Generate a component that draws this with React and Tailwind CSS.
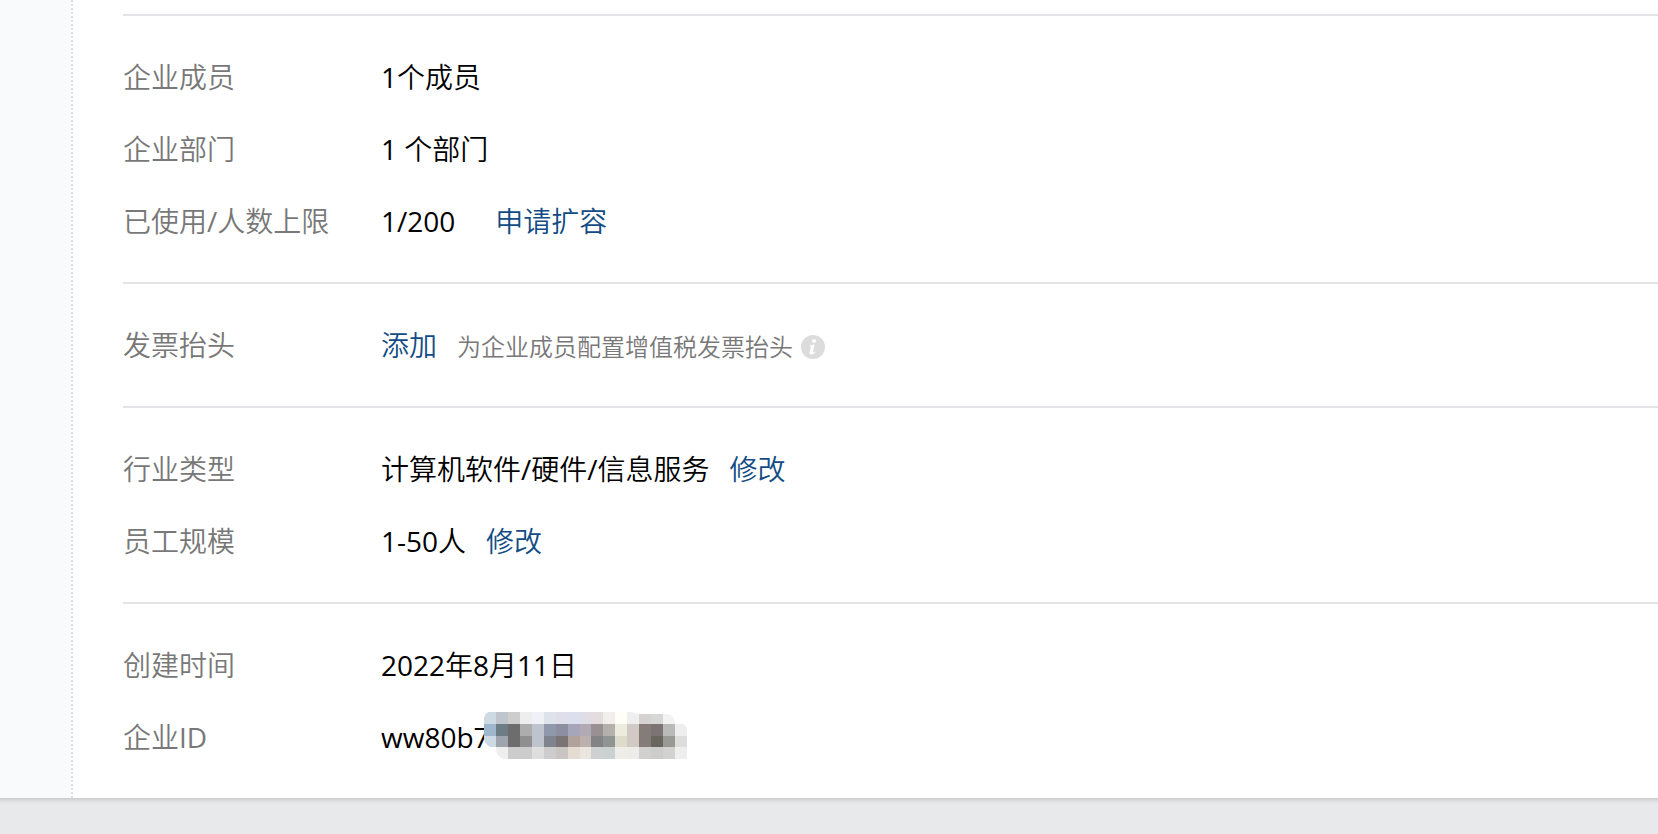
import clsx from "clsx";

const CELL = 12;

// one array per row of blocks, null leaves the cell empty
const MOSAIC = [
  ["#cddae4", "#bfc4cd", "#cdcdcd", "#eeeeee", "#f0f1f6", "#dde2eb", "#dedfeb", "#dcdfed", "#dfdde6", "#e4dddf", "#f2eeeb", "#fffff7", "#efefef", "#d6d2d2", "#d8d7d8", "#f3f3f3", null],
  ["#9fb7cc", "#6e7c86", "#6d6d6d", "#adadad", "#bfc3ce", "#9099ac", "#8d8fa0", "#a7a5b9", "#b1aab5", "#9a8f92", "#b4b0ac", "#ebecdd", "#d1cac4", "#857b79", "#7c7473", "#b9bab9", "#eeeeee"],
  ["#cddae4", "#a0a4ae", "#6d6d6d", "#8f8f8f", "#bfc3ce", "#7f848e", "#7a7475", "#b1a29c", "#bbb1af", "#838385", "#909493", "#dddccb", "#d1cac4", "#857b79", "#69665e", "#999a95", "#dddddd"],
  [null, "#eeeeee", "#cccccc", "#cccccc", "#dedede", "#cdcdcd", "#c9c5c2", "#e5dbd1", "#e9e6e0", "#ced0d1", "#cbd0d0", "#eeede8", "#edece8", "#d2d0cf", "#cccccb", "#d2d2d1", "#eeeeee"],
];

function Mosaic({ className }) {
  return (
    <svg width="203" height="47" viewBox="0 0 204 48" preserveAspectRatio="none" className={className} aria-hidden="true">
      <clipPath id="mosaic-edge">
        <path d="M5 0H148L156 2H184Q192 3 192 12H198Q204 13 204 18V48H20Q12 46 12 36H7Q0 33 0 26V6Q1 1 5 0Z" />
      </clipPath>
      <g clipPath="url(#mosaic-edge)" shapeRendering="crispEdges">
        {MOSAIC.map((row, y) =>
          row.map((fill, x) =>
            fill && <rect key={`${x}-${y}`} x={x * CELL} y={y * CELL} width={CELL} height={CELL} fill={fill} />
          )
        )}
      </g>
    </svg>
  );
}

function InfoIcon() {
  return (
    <svg width="24" height="24" viewBox="0 0 24 24" aria-hidden="true">
      <circle cx="12" cy="12" r="12" fill="#dcdcdc" />
      <circle cx="13" cy="6" r="2" fill="#fff" />
      <path d="M9 10.3L13.6 9.6L11.9 16.6Q11.7 17.8 12.6 17.4L14.2 16.3L14.6 16.9Q12.6 19.4 10.3 19.4Q8 19.4 8.6 17L10 11.4L8.8 11.2Z" fill="#fff" />
    </svg>
  );
}

function ActionLink({ children }) {
  return (
    <a href="#" className="text-[#134c84] hover:underline">
      {children}
    </a>
  );
}

function Section({ first, last, children }) {
  return (
    <dl className={clsx("flex flex-col gap-[30px] py-10", !last && "border-b-2 border-[#e4e4e8]", first && "border-t-2")}>
      {children}
    </dl>
  );
}

function Row({ label, wide, children }) {
  return (
    <div className="flex h-[42px] leading-[42px]">
      <dt className="w-[258px] shrink-0 text-[#787878]">{label}</dt>
      <dd className={clsx("flex items-baseline whitespace-nowrap", wide ? "gap-10" : "gap-5")}>{children}</dd>
    </div>
  );
}

export default function App() {
  return (
    <div className="min-h-screen overflow-x-hidden bg-[#e8e9eb] font-['Open_Sans','Noto_Sans_CJK_SC_DemiLight','Noto_Sans_CJK_SC',sans-serif] text-[28px] text-black">
      <div className="flex bg-white shadow-[0_-4px_5px_5px_rgba(0,0,0,0.2)]">
        <aside className="w-[73px] shrink-0 border-r-2 border-dotted border-[#dcdfe4] bg-[#f9fafc] bg-clip-padding" />

        <main className="min-w-0 flex-1 pt-3.5 pl-[50px]">
          <Section first>
            <Row label="企业成员">1个成员</Row>
            <Row label="企业部门">1 个部门</Row>
            <Row label="已使用/人数上限" wide>
              <span>1/200</span>
              <ActionLink>申请扩容</ActionLink>
            </Row>
          </Section>

          <Section>
            <Row label="发票抬头">
              <ActionLink>添加</ActionLink>
              <span className="flex items-center gap-2 text-2xl leading-[42px] text-[#787878]">
                为企业成员配置增值税发票抬头
                <InfoIcon />
              </span>
            </Row>
          </Section>

          <Section>
            <Row label="行业类型">
              <span>计算机软件/硬件/信息服务</span>
              <ActionLink>修改</ActionLink>
            </Row>
            <Row label="员工规模">
              <span>1-50人</span>
              <ActionLink>修改</ActionLink>
            </Row>
          </Section>

          <Section last>
            <Row label="创建时间">2022年8月11日</Row>
            <Row label="企业ID">
              <span className="relative">
                ww80b7
                <Mosaic className="absolute -top-1 left-[103px] max-w-none" />
              </span>
            </Row>
          </Section>
        </main>
      </div>
    </div>
  );
}
